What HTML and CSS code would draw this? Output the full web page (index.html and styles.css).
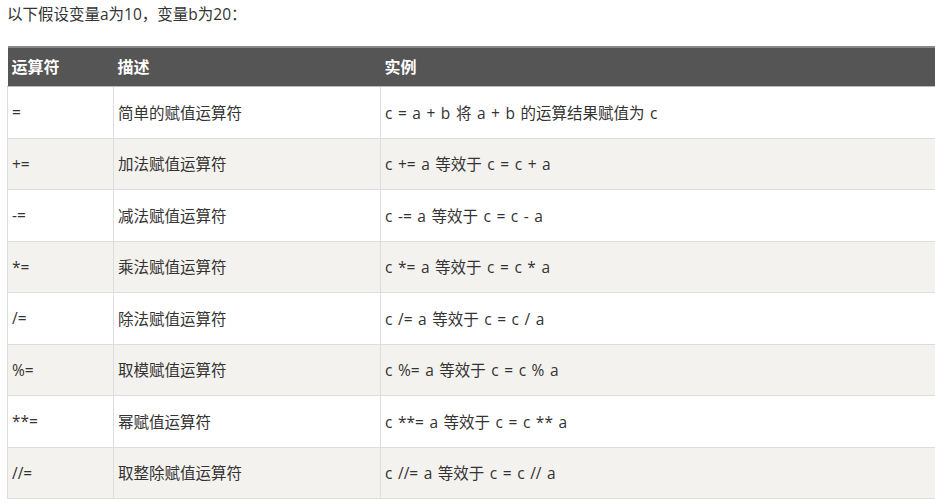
FILE: index.html
```html
<!DOCTYPE html>
<html lang="zh">
<head>
<meta charset="utf-8">
<link rel="stylesheet" href="styles.css">
</head>
<body>
<div class="page">
<p class="intro">以下假设变量a为10，变量b为20：</p>
<table class="ops">
<thead>
<tr><th class="c1">运算符</th><th class="c2">描述</th><th>实例</th></tr>
</thead>
<tbody>
<tr><td>=</td><td>简单的赋值运算符</td><td>c = a + b 将 a + b 的运算结果赋值为 c</td></tr>
<tr><td>+=</td><td>加法赋值运算符</td><td>c += a 等效于 c = c + a</td></tr>
<tr><td>-=</td><td>减法赋值运算符</td><td>c -= a 等效于 c = c - a</td></tr>
<tr><td>*=</td><td>乘法赋值运算符</td><td>c *= a 等效于 c = c * a</td></tr>
<tr><td>/=</td><td>除法赋值运算符</td><td>c /= a 等效于 c = c / a</td></tr>
<tr><td>%=</td><td>取模赋值运算符</td><td>c %= a 等效于 c = c % a</td></tr>
<tr><td>**=</td><td>幂赋值运算符</td><td>c **= a 等效于 c = c ** a</td></tr>
<tr><td>//=</td><td>取整除赋值运算符</td><td>c //= a 等效于 c = c // a</td></tr>
</tbody>
</table>
</div>
</body>
</html>
```
FILE: styles.css
```css
html, body {
  margin: 0;
  padding: 0;
  overflow: hidden;
  background: #fff;
}
.page {
  padding: 0 0 0 7px;
  font-family: "Open Sans", "Noto Sans CJK SC", sans-serif;
  color: #333;
  font-size: 15.5px;
}
.intro {
  margin: 0;
  padding-top: 3px;
  height: 43px;
  line-height: 22px;
  font-size: 15.5px;
}
.ops {
  border-collapse: collapse;
  width: 940px;
  table-layout: fixed;
}
.ops th {
  background: #555;
  color: #fff;
  font-weight: bold;
  font-size: 16px;
  text-align: left;
  height: 36px;
  padding: 0 4px 2px;
  border-top: 2px solid #888;
  border-bottom: 1px solid #bbb;
}
.ops th.c1 { width: 98px; }
.ops th.c2 { width: 259px; }
.ops td {
  height: 50.5px;
  padding: 0 4px;
  border: 1px solid #ddd;
  vertical-align: middle;
  word-spacing: 1.5px;
}
.ops tbody tr:nth-child(even) td {
  background: #f3f2ee;
}
.ops tbody tr:nth-child(odd) td {
  background: #fff;
}
```
